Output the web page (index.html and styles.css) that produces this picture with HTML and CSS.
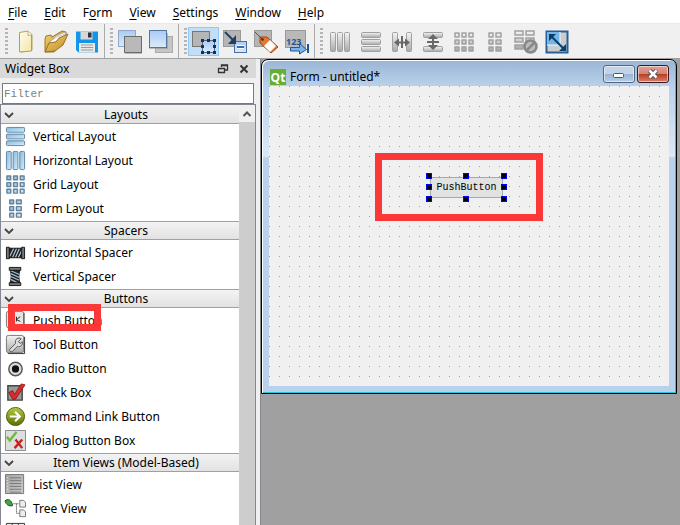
FILE: index.html
```html
<!DOCTYPE html>
<html lang="en">
<head>
<meta charset="utf-8">
<title>Qt Designer</title>
<link rel="stylesheet" href="styles.css">
</head>
<body>
<svg class="defs" aria-hidden="true">
  <defs>
    <linearGradient id="pale" x2="0" y2="1"><stop offset="0" stop-color="#a9caf6"/><stop offset="1" stop-color="#dceafa"/></linearGradient>
    <linearGradient id="grey" x2="1" y2="1"><stop offset="0" stop-color="#a2a2a2"/><stop offset="1" stop-color="#cecece"/></linearGradient>
    <linearGradient id="steel" x2="0" y2="1"><stop offset="0" stop-color="#f4f4f4"/><stop offset="1" stop-color="#a9a9a9"/></linearGradient>
    <linearGradient id="sky" x2="1" y2="1"><stop offset="0" stop-color="#7fbbe2"/><stop offset="1" stop-color="#d5efff"/></linearGradient>
    <linearGradient id="paper" x2="1" y2="1"><stop offset="0" stop-color="#fffef0"/><stop offset="1" stop-color="#f3e5a4"/></linearGradient>
    <linearGradient id="gold" x2="1" y2="1"><stop offset="0" stop-color="#f3d477"/><stop offset="1" stop-color="#c08a1e"/></linearGradient>
    <linearGradient id="green" x2="0" y2="1"><stop offset="0" stop-color="#b5cc3c"/><stop offset="1" stop-color="#587000"/></linearGradient>
    <symbol id="vbox" viewBox="0 0 22 22"><rect x="1.5" y="1.5" width="19" height="5" rx="1"/><rect x="1.5" y="8.5" width="19" height="5" rx="1"/><rect x="1.5" y="15.5" width="19" height="5" rx="1"/></symbol>
    <symbol id="hbox" viewBox="0 0 22 22"><rect x="1.5" y="1.5" width="5" height="19" rx="1"/><rect x="8.5" y="1.5" width="5" height="19" rx="1"/><rect x="15.5" y="1.5" width="5" height="19" rx="1"/></symbol>
    <symbol id="cells" viewBox="0 0 22 22"><path stroke-width="1.5" stroke-linejoin="round" d="M2 2h4v4H2zM9 2h4v4H9zM16 2h4v4h-4zM2 9h4v4H2zM9 9h4v4H9zM16 9h4v4h-4zM2 16h4v4H2zM9 16h4v4H9zM16 16h4v4h-4z"/></symbol>
    <symbol id="pairs" viewBox="0 0 22 22"><path stroke-width="1.5" stroke-linejoin="round" d="M5 2h4v4H5zM12 2h5v4h-5zM5 9h4v4H5zM12 9h5v4h-5zM5 16h4v4H5zM12 16h5v4h-5z"/></symbol>
    <symbol id="chev" viewBox="0 0 10 6"><path d="M1 1l4 4 4-4" fill="none" stroke="#444" stroke-width="1.8"/></symbol>
  </defs>
</svg>

<nav class="menubar">
  <a href="#"><u>F</u>ile</a><a href="#"><u>E</u>dit</a><a href="#">F<u>o</u>rm</a><a href="#"><u>V</u>iew</a><a href="#"><u>S</u>ettings</a><a href="#"><u>W</u>indow</a><a href="#"><u>H</u>elp</a>
</nav>

<div class="toolbar">
  <div class="group"><i class="grip"></i>
    <button aria-label="New"><svg viewBox="0 0 24 24"><path d="M7 3l9-2 3 3v15l-12 3z" fill="#b79c5c" opacity=".5" transform="translate(1 1)"/><path d="M6.5 2.5L15 1l3.500 4v16L6.500 22z" fill="url(#paper)" stroke="#bd9c47"/><path d="M15 1v4.500l3.500-.5" fill="#fff" stroke="#bd9c47" stroke-width=".8"/></svg></button>
    <button aria-label="Open"><svg viewBox="0 0 24 24"><path d="M1 22V9l1-3 5-1 1 2 10-6 4 1v4L10 22z" fill="url(#gold)" stroke="#9f762a"/><path d="M4 14l8-8 9-4 1 3-11 12-6 3z" fill="#fff" stroke="#999" stroke-width=".7"/><path d="M5 12l8-5 8-3M6 15l8-5 7-4" fill="none" stroke="#aaa" stroke-width=".7"/><path d="M1 22l4-9 7-1 3-4 9-4-5 11-8 6z" fill="url(#gold)" stroke="#95712b"/></svg></button>
    <button aria-label="Save"><svg viewBox="0 0 24 24"><path d="M1 1.500h22v21H3.500L1 20z" fill="#1295ea"/><path d="M5.500 1.500h12v8h-12z" fill="#d8d8d8"/><path d="M13 2.500h3.500v5H13z" fill="#333"/><path d="M4 13h16v9.500H4z" fill="#e8e8e8"/><path d="M6 15h12M6 17.500h12M6 20h12" stroke="#999" stroke-width="1.200"/></svg></button>
  </div>
  <div class="group"><i class="grip"></i>
    <button aria-label="Send to Back"><svg viewBox="0 0 24 24"><rect x=".5" y=".5" width="17" height="16" fill="url(#pale)" stroke="#8fa8ca"/><rect x="6.500" y="6.500" width="17" height="16" fill="#b9b9b9" stroke="#6c6c6c"/><path d="M7 23.500h17" stroke="#999" opacity=".6"/></svg></button>
    <button aria-label="Bring to Front"><svg viewBox="0 0 24 24"><rect x="6.500" y="6.500" width="17" height="16" fill="#c6c6c6" stroke="#aaa"/><rect x=".5" y=".5" width="17" height="17" fill="url(#pale)" stroke="#54759e"/><path d="M0 18.500h18.500V3" fill="none" stroke="#888" opacity=".5"/></svg></button>
  </div>
  <div class="group"><i class="grip"></i>
    <button class="on" aria-label="Edit Widgets"><svg viewBox="0 0 24 24"><rect x=".5" y="1.500" width="17" height="15" fill="#b5b5b5" stroke="#777"/><rect x="10.500" y="10.500" width="12" height="12" fill="url(#pale)" stroke="#48688f"/><path d="M9 9h3v3H9zM15 9h3v3h-3zM21 9h3v3h-3zM9 15h3v3H9zM21 15h3v3h-3zM9 21h3v3H9zM15 21h3v3h-3zM21 21h3v3h-3z" fill="#163154"/></svg></button>
    <button aria-label="Edit Signals/Slots"><svg viewBox="0 0 24 24"><rect x=".5" y=".5" width="17" height="16" fill="#b5b5b5" stroke="#999"/><rect x="11.500" y="11.500" width="12" height="11" fill="url(#pale)" stroke="#4773a4"/><path d="M14 17h7" stroke="#fff" stroke-width="4"/><path d="M14 17h7" stroke="#416a9b" stroke-width="2"/><path d="M2 2l8 8" stroke="#243f61" stroke-width="2"/><path d="M13 5v9H5z" fill="#243f61"/></svg></button>
    <button aria-label="Edit Buddies"><svg viewBox="0 0 24 24"><rect x=".5" y=".5" width="17" height="16" fill="#b5b5b5" stroke="#999"/><path d="M6 7h7l11 10-7 6L6 13z" fill="#e77732" stroke="#9c471b"/><path d="M16 10l6 6-6 6-6-6z" fill="#fff"/><path d="M1 2l7 7" stroke="#555"/><circle cx="8.500" cy="9.500" r="1.300" fill="#5b2a13"/></svg></button>
    <button aria-label="Edit Tab Order"><svg viewBox="0 0 24 24"><rect x=".5" y=".5" width="20" height="17" fill="#b9b9b9" stroke="#999"/><text x="1" y="15" class="digits">123</text><path d="M5.500 17.500h9v-4l7 6-7 4.500v-3h-9z" fill="#80b2e8" stroke="#1c5799"/><path d="M23 14v9" stroke="#1c5799" stroke-width="2"/></svg></button>
  </div>
  <div class="group last"><i class="grip"></i>
    <button aria-label="Lay Out Horizontally"><svg class="off" viewBox="0 0 24 24"><use href="#hbox" x="1" y="1" width="22" height="22"/></svg></button>
    <button aria-label="Lay Out Vertically"><svg class="off" viewBox="0 0 24 24"><use href="#vbox" x="1" y="1" width="22" height="22"/></svg></button>
    <button aria-label="Horizontal Splitter"><svg class="off" viewBox="0 0 24 24"><rect x="2.500" y="2.500" width="5" height="19" rx="1"/><rect x="16.500" y="2.500" width="5" height="19" rx="1"/><path class="arrow" d="M4 12.500l5-4v3h6v-3l5 4-5 4v-3H9v3zM11 6h2v12h-2z"/></svg></button>
    <button aria-label="Vertical Splitter"><svg class="off" viewBox="0 0 24 24"><rect x="2.500" y="2.500" width="19" height="5" rx="1"/><rect x="2.500" y="16.500" width="19" height="5" rx="1"/><path class="arrow" d="M12 4l5 5h-4v6h4l-5 5-5-5h4V9H7zM6 11h12v2H6z"/></svg></button>
    <button aria-label="Lay Out in a Grid"><svg class="off" viewBox="0 0 24 24"><use href="#cells" x="1" y="1" width="22" height="22"/></svg></button>
    <button aria-label="Lay Out in a Form"><svg class="off" viewBox="0 0 24 24"><use href="#pairs" x="1" y="1" width="22" height="22"/></svg></button>
    <button aria-label="Break Layout"><svg class="off" viewBox="0 0 24 24"><path stroke-width="1.500" d="M1 1h8v4H1zM12 1h8v4h-8zM1 8h8v4H1zM12 8h8v4h-8zM1 15h8v4H1z"/><circle cx="16.500" cy="16.500" r="6" fill="#bbb" stroke="#888" stroke-width="2.500"/><path d="M12.500 20.500l8-8" stroke="#888" stroke-width="2.500"/></svg></button>
    <button aria-label="Adjust Size"><svg viewBox="0 0 24 24"><path d="M1.500 1.500h21v21h-21z" fill="#ccc" stroke="#246197" stroke-width="2"/><path d="M2 2h13v13H2z" fill="#77b5e6"/><path d="M2 15h13V2" fill="none" stroke="#eef7ff"/><path d="M6 6l12 12" stroke="#073f6e" stroke-width="2"/><path d="M4 4h7L4 11zM21 21h-7l7-7z" fill="#073f6e"/></svg></button>
  </div>
</div>

<main class="workspace">
  <aside class="dock">
    <header class="dock-title"><h1>Widget Box</h1>
      <button aria-label="Float"><svg viewBox="0 0 10 10"><path d="M3.500 3V1h6v5H7M3 1.500h7M.5 4.500h6v4h-6zM0 4.500h7" fill="none" stroke="#333" stroke-width="1.300"/></svg></button>
      <button aria-label="Close"><svg viewBox="0 0 10 10"><path d="M1.500 1.500l7 7M8.500 1.500l-7 7" stroke="#333" stroke-width="2"/></svg></button>
    </header>
    <input class="filter" type="text" placeholder="Filter" aria-label="Filter">
    <div class="box">
      <div class="widgets">
        <section><button class="cat"><svg><use href="#chev"/></svg><span>Layouts</span></button>
          <ul>
            <li><svg class="lay" viewBox="0 0 22 22"><use href="#vbox"/></svg>Vertical Layout</li>
            <li><svg class="lay" viewBox="0 0 22 22"><use href="#hbox"/></svg>Horizontal Layout</li>
            <li><svg class="lay" viewBox="0 0 22 22"><use href="#cells"/></svg>Grid Layout</li>
            <li><svg class="lay" viewBox="0 0 22 22"><use href="#pairs"/></svg>Form Layout</li>
          </ul></section>
        <section><button class="cat"><svg><use href="#chev"/></svg><span>Spacers</span></button>
          <ul>
            <li><svg viewBox="0 0 22 22"><path d="M4 6h14v11H4z" fill="#222"/><path d="M5 15l4-8M8 16l4-9M11 16l4-9M14 16l4-8" stroke="#b6cbd8" stroke-width="1.200"/><path d="M1.500 5.500h3v12h-3zM17.500 5.500h3v12h-3z" fill="#777" stroke="#151515"/></svg>Horizontal Spacer</li>
            <li><svg viewBox="0 0 22 22"><path d="M5 4h11l-1 7 1 7H5l1-7z" fill="#222"/><path d="M6 5l9 4M6 8l9 4M6 11l9 4M6 14l8 4" stroke="#a4c3d8" stroke-width="1.200"/><path d="M4.500 1.500h12v3h-12zM4.500 17.500h12v3h-12z" fill="#777" stroke="#151515"/></svg>Vertical Spacer</li>
          </ul></section>
        <section><button class="cat"><svg><use href="#chev"/></svg><span>Buttons</span></button>
          <ul>
            <li class="marked"><svg viewBox="0 0 22 22"><rect x="1.500" y="1.500" width="18" height="17" rx="2" fill="#e5e5e5" stroke="#777"/><path d="M20 3v17H3" fill="none" stroke="#444"/><path d="M12 7v5M16 7l-4 3 4 2" fill="none" stroke="#222"/></svg>Push Button<i class="mark"></i></li>
            <li><svg viewBox="0 0 22 22"><rect x="1.500" y="1.500" width="18" height="18" rx="2" fill="url(#steel)" stroke="#777"/><path d="M20.500 3v17.500H3" fill="none" stroke="#333"/><path d="M5 16l6-6c-1-5 3-7 6-5l-3 3 2 2 2-2c1 4-2 6-5 5l-5 5c-2 1-4 0-3-2z" fill="#ddd" stroke="#555"/></svg>Tool Button</li>
            <li><svg viewBox="0 0 22 22"><circle cx="11" cy="11.500" r="7" fill="#ddd" stroke="#555" stroke-width="1.500"/><circle cx="11" cy="11.500" r="3.800" fill="#111"/></svg>Radio Button</li>
            <li><svg viewBox="0 0 22 22"><path d="M3 4h15v15H3z" fill="#999" stroke="#444" stroke-width="1.500"/><path d="M4 11l4-2 2 4 7-11 4 1-10 15H8z" fill="#dc2929" stroke="#811" stroke-width=".8"/></svg>Check Box</li>
            <li><svg viewBox="0 0 22 22"><circle cx="11" cy="11" r="9.500" fill="url(#green)" stroke="#4f6212"/><path d="M5 11h10M10.500 6l5 5-5 5" fill="none" stroke="#fff" stroke-width="2.300"/></svg>Command Link Button</li>
            <li><svg viewBox="0 0 22 22"><path d="M.5.500h21v21H.500z" fill="#ddd" stroke="#888"/><path d="M2 7l3 4 7-9" fill="none" stroke="#6bbd37" stroke-width="2.500"/><path d="M11 10l7 9M18 10l-8 9" stroke="#c82020" stroke-width="2.500"/></svg>Dialog Button Box</li>
          </ul></section>
        <section><button class="cat"><svg><use href="#chev"/></svg><span>Item Views (Model-Based)</span></button>
          <ul>
            <li><svg viewBox="0 0 22 22"><path d="M.5.500h19v20H.500z" fill="url(#grey)" stroke="#777"/><path d="M5 4h12M5 7h12M5 10h12M5 13h12M5 16h12M5 19h12" stroke="#777"/><path d="M2 4h1M2 7h1M2 10h1M2 13h1M2 16h1" stroke="#eee"/></svg>List View</li>
            <li><svg viewBox="0 0 22 22"><path d="M0 3c3-3 7-1 8 5-4 1-7-1-8-5z" fill="#47a248" stroke="#174e22"/><path d="M9 6h6M12 6v10h4" fill="none" stroke="#222" stroke-dasharray="1 1"/><path d="M15.500 2.500h4l2 2v5h-6zM15.500 12.500h4l2 2v5h-6z" fill="#eee" stroke="#777"/></svg>Tree View</li>
            <li aria-label="Table View"><svg viewBox="0 0 22 22"><path d="M1.500 1.500h19v18h-19zM1 6h19M7.500 2v18M14 2v18" fill="#eee" stroke="#333"/></svg></li>
          </ul></section>
      </div>
      <div class="scroll"><button aria-label="Scroll up"><svg viewBox="0 0 10 6"><path d="M1.500 5L5 1.500 8.500 5" fill="none" stroke="#555" stroke-width="2"/></svg></button><div class="thumb"></div></div>
    </div>
  </aside>

  <div class="mdi">
    <section class="window">
      <header class="window-title">
        <svg class="logo" viewBox="0 0 16 16"><path d="M0 0h16v16H0z" fill="#66ae35"/><text x="8" y="13" text-anchor="middle">Qt</text></svg>
        <h2>Form - untitled*</h2>
        <button class="min" aria-label="Minimize"><svg viewBox="0 0 12 12"><rect x=".5" y="5.500" width="10" height="4" rx="1" fill="#fff" stroke="#555"/></svg></button>
        <button class="close" aria-label="Close"><svg viewBox="0 0 12 12"><path d="M2.500 2.500l7 7M9.500 2.500l-7 7" stroke="#494f5e" stroke-width="4.500"/><path d="M2.500 2.500l7 7M9.500 2.500l-7 7" stroke="#fff" stroke-width="2.500"/></svg></button>
      </header>
      <div class="canvas">
        <div class="highlight"></div>
        <div class="selected"><button>PushButton</button>
          <i class="h n w"></i><i class="h n c"></i><i class="h n e"></i><i class="h m w"></i><i class="h m e"></i><i class="h s w"></i><i class="h s c"></i><i class="h s e"></i>
        </div>
      </div>
    </section>
  </div>
</main>
</body>
</html>
```
FILE: styles.css
```css
* { box-sizing: border-box; }
body {
  margin: 0;
  height: 100vh;
  display: flex;
  flex-direction: column;
  overflow: hidden;
  background: #f0f0f0;
  color: #000;
  font: 12px/18px "Noto Sans", "Open Sans", sans-serif;
}
button { margin: 0; padding: 0; border: 0; background: none; color: inherit; font: inherit; }
svg { display: block; overflow: visible; }
h1, h2 { margin: 0; font: inherit; }
ul { margin: 0; padding: 0; list-style: none; }
.defs { position: absolute; width: 0; height: 0; }

.menubar { display: flex; gap: 17px; height: 24px; padding: 4px 8px; background: #fff; border-bottom: 1px solid #e9e9e9; flex: none; }
.menubar a { color: inherit; text-decoration: none; white-space: nowrap; }
.menubar u { text-underline-offset: 2px; }

.toolbar { display: flex; flex: none; height: 35px; border-bottom: 1px solid #a0a0a0; }
.group { display: flex; align-items: center; padding: 1px 2px 0 5px; border-right: 1px solid #aaa; }
.group.last { border: 0; }
.grip { width: 3px; height: 27px; margin-right: 1px; background: repeating-linear-gradient(#b5b5b5 0 2px, transparent 2px 4px); }
.group button { width: 31px; height: 29px; flex: none; display: grid; place-items: center; }
.group button.on { background: #c2def5; border: 1px solid #90c8f6; }
.group svg { width: 24px; height: 24px; }
.digits { font: bold 9px "Open Sans", sans-serif; fill: #1c5799; }
.off { fill: url(#steel); stroke: #a0a0a0; }
.off .arrow { fill: #686868; stroke: none; }

.workspace { display: flex; flex: 1; min-height: 0; }
.dock { display: flex; flex-direction: column; width: 260px; flex: none; padding-right: 4px; }
.dock-title { display: flex; align-items: center; gap: 11px; height: 19px; padding: 0 7px 0 5px; background: #d9d9d9; flex: none; }
.dock-title h1 { flex: 1; }
.dock-title svg { width: 10px; height: 10px; }
.filter { height: 21px; margin: 5px 2px 0; padding: 0 1px; flex: none; border: 1px solid #7a7a7a; background: #fff; font: 11px "Liberation Mono", monospace; }
.filter::placeholder { color: #808080; opacity: 1; }
.box { display: flex; flex: 1; min-height: 0; border: 1px solid #828790; border-bottom: 0; background: #fff; overflow: hidden; }
.widgets { flex: 1; overflow: hidden; }
.cat { display: flex; align-items: center; width: 100%; height: 19px; margin-bottom: 1px; padding: 0 3px; border: solid #a0a0a0; border-width: 1px 0; background: linear-gradient(#f3f3f3, #e2e2e2); }
section:first-child .cat { border-top-color: #f3f3f3; }
.cat svg { width: 10px; height: 6px; }
.cat span { flex: 1; padding-left: 2px; text-align: center; }
.widgets li { display: flex; align-items: center; gap: 7px; height: 24px; padding: 0 0 1px 4px; }
.widgets li svg { width: 21px; height: 21px; }
.lay { fill: url(#sky); stroke: #688299; }
.marked { position: relative; }
.mark { position: absolute; left: 7px; top: -5px; width: 93px; height: 27px; border: 7px solid #fb3838; z-index: 1; }
.scroll { display: flex; flex-direction: column; width: 16px; background: #f0f0f0; }
.scroll button { height: 17px; display: grid; place-items: center; }
.scroll svg { width: 10px; height: 6px; }
.thumb { flex: 1; background: #cdcdcd; }

.mdi { position: relative; flex: 1; background: #a0a0a0; border-left: 1px solid #828790; overflow: hidden; }
.window {
  position: absolute; left: 0; top: 0; width: 416px;
  padding: 2px 7px 7px;
  border: 1px solid #000;
  border-radius: 7px 7px 0 0;
  background: linear-gradient(#9ab6d5, #b9d1ea 26px, #dbe8f6 96px, #b9d1ea 98px);
  box-shadow: inset 1px 1px #fff, inset -1px -1px #23c6e0;
}
.window-title { display: flex; align-items: flex-start; height: 24px; }
.logo { width: 16px; height: 16px; margin: 7px 4px 0 1px; }
.logo text { font: bold 12px "Open Sans", sans-serif; fill: #fff; }
.window-title h2 { flex: 1; padding-top: 6px; }
.window-title button { width: 32px; height: 18px; margin: 3px 0 0 2px; display: grid; place-items: center; border: 1px solid #526783; border-radius: 3px; box-shadow: inset 0 0 0 1px #ffffff88; }
.window-title button svg { width: 12px; height: 12px; }
.min { background: linear-gradient(#c3d4e8 50%, #98b3d1 50%, #b7cee7); }
.window-title .close { border-color: #431422; background: linear-gradient(#e0a093, #d28476 50%, #b83a22 50%, #d5836a); }
.canvas {
  position: relative; height: 300px; overflow: hidden;
  background: #f0f0f0 conic-gradient(from 270deg at 1px 1px, #a0a0a0 90deg, transparent 90deg);
  background-size: 10px 10px;
}
.highlight { position: absolute; left: 106px; top: 67px; width: 168px; height: 68px; border: 7px solid #fb3838; }
.selected { position: absolute; left: 161px; top: 91px; }
.selected button { display: block; width: 73px; height: 21px; border: 1px solid #a2a9b0; background: #e1e3e2; font: 10px "Liberation Mono", monospace; }
.h { position: absolute; width: 6px; height: 6px; background: #000; border: 1px solid #00f; }
.n { top: -4px; }
.m { top: 7px; }
.s { bottom: -4px; }
.w { left: -4px; }
.c { left: 33px; }
.e { right: -4px; }
```
